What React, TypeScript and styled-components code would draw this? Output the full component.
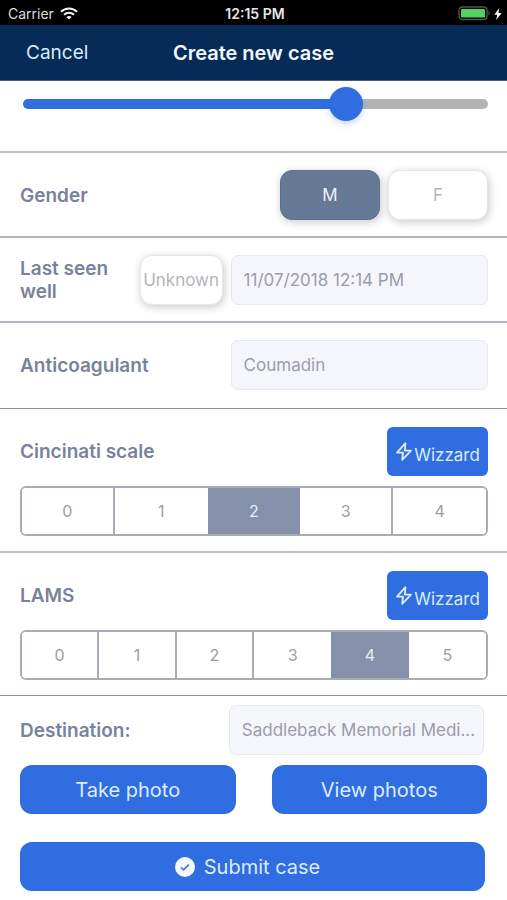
import React, { useState } from "react";
import styled, { createGlobalStyle, css } from "styled-components";

const blue = "#2f6de1";
const slate = "#7a829b";
const line = "#a9abb9";

const GlobalStyle = createGlobalStyle`
  *, *::before, *::after { box-sizing: border-box; }
  body {
    margin: 0;
    background: #fff;
    font-family: Inter, "Liberation Sans", sans-serif;
    color: ${slate};
  }
  button, input, select { font-family: inherit; margin: 0; }
`;

const Screen = styled.div`
  min-height: 100vh;
  display: flex;
  flex-direction: column;
`;

const StatusBar = styled.div`
  display: grid;
  grid-template-columns: 1fr auto 1fr;
  align-items: center;
  height: 25px;
  padding: 2px 5px 0 8px;
  background: #000;
  color: #dcdcdc;
  font-size: 14px;
  line-height: 20px;
`;

const StatusGroup = styled.div<{ $end?: boolean }>`
  display: flex;
  align-items: center;
  gap: ${(p) => (p.$end ? 3 : 6)}px;
  justify-content: ${(p) => (p.$end ? "flex-end" : "flex-start")};
`;

const Clock = styled.span`
  font-size: 14px;
  font-weight: 600;
  color: #e6e6e6;
`;

const NavBar = styled.header`
  display: grid;
  grid-template-columns: 1fr auto 1fr;
  align-items: center;
  height: 56px;
  padding: 0 26px;
  background: #062b57;
  border-bottom: 1px solid #46597c;
`;

const CancelButton = styled.button`
  justify-self: start;
  padding: 0;
  border: 0;
  background: none;
  color: #d9e9fb;
  font-size: 19px;
  line-height: 24px;
`;

const Title = styled.h1`
  margin: 0;
  color: #f2f8ff;
  font-size: 20px;
  line-height: 24px;
  font-weight: 600;
`;

const Section = styled.section<{ $rule?: number; $tone?: string }>`
  padding: 17px 19px 16px 20px;
  border-bottom: ${(p) => p.$rule ?? 2}px solid ${(p) => p.$tone ?? "#b3b3c6"};
`;

const SliderSection = styled(Section)`
  padding: 6px 19px 30px 23px;
`;

const AnticoagulantSection = styled(Section)`
  padding-bottom: 18px;
`;

const Range = styled.input<{ $fill: number }>`
  display: block;
  width: 100%;
  height: 34px;
  appearance: none;
  background: none;

  &::-webkit-slider-runnable-track {
    height: 10px;
    border-radius: 5px;
    background: linear-gradient(to right, ${blue} ${(p) => p.$fill}%, #b3b3b3 ${(p) => p.$fill}%);
  }
  &::-webkit-slider-thumb {
    appearance: none;
    width: 34px;
    height: 34px;
    margin-top: -12px;
    border-radius: 50%;
    background: ${blue};
    box-shadow: 0 3px 6px rgba(47, 109, 225, 0.25);
  }
`;

const Row = styled.div`
  display: flex;
  align-items: center;
  gap: 8px;
`;

const labelText = css`
  flex: 1;
  font-size: 19px;
  line-height: 23px;
  font-weight: 600;
  color: ${slate};
`;

const FieldLabel = styled.label`
  ${labelText}
`;

const GroupLabel = styled.div`
  ${labelText}
`;

const HiddenInput = styled.input`
  position: absolute;
  opacity: 0;
  pointer-events: none;
`;

const Pill = styled.label<{ $on?: boolean; $width: number }>`
  position: relative;
  display: flex;
  align-items: center;
  justify-content: center;
  width: ${(p) => p.$width}px;
  height: 50px;
  border: 1px solid ${(p) => (p.$on ? "#5d7190" : "#e6e6e9")};
  border-radius: 12px;
  background: ${(p) => (p.$on ? "#677a95" : "#fff")};
  color: ${(p) => (p.$on ? "#e9f2fc" : "#b4b5ba")};
  font-size: 17px;
  line-height: 24px;
  box-shadow: 1px 2px 9px rgba(0, 0, 0, 0.22);
`;

const fieldBox = css`
  flex: none;
  width: 55%;
  height: 50px;
  padding: 0 0 0 12px;
  border: 1px solid #e7e9ee;
  border-radius: 7px;
  background: #f4f6fb;
  color: #989dad;
  font-size: 17px;
  line-height: 24px;
`;

const TextField = styled.input`
  ${fieldBox}
`;

const SelectField = styled.select`
  ${fieldBox}
  appearance: none;
`;

const WizardButton = styled.button`
  display: flex;
  align-items: center;
  justify-content: center;
  gap: 1px;
  width: 101px;
  height: 49px;
  padding: 0;
  border: 0;
  border-radius: 6px;
  background: ${blue};
  color: #d9ebff;
  font-size: 17px;
  line-height: 24px;

  span { padding-top: 6px; }
`;

const ScaleSection = styled(Section)`
  padding: 18px 19px 15px 20px;
`;

const Segments = styled.div`
  display: grid;
  grid-auto-flow: column;
  grid-auto-columns: minmax(0, 1fr);
  height: 50px;
  margin-top: 10px;
  border: 2px solid ${line};
  border-radius: 6px;
  overflow: hidden;
`;

const Segment = styled.label<{ $on: boolean; $divided: boolean }>`
  position: relative;
  display: flex;
  align-items: center;
  justify-content: center;
  border-right: ${(p) => (p.$divided ? `2px solid ${line}` : "0")};
  background: ${(p) => (p.$on ? "#8590aa" : "#fff")};
  color: ${(p) => (p.$on ? "#e7f0fb" : "#9b9da6")};
  font-size: 16px;
  line-height: 20px;
`;

const Footer = styled.section`
  padding: 9px 20px;
`;

const DestinationRow = styled(Row)`
  padding-right: 3px;
`;

const PhotoRow = styled.div`
  display: grid;
  grid-template-columns: 1fr 1fr;
  gap: 36px;
  margin-top: 10px;
`;

const ActionButton = styled.button`
  display: flex;
  align-items: center;
  justify-content: center;
  gap: 9px;
  width: 100%;
  height: 49px;
  border: 0;
  border-radius: 12px;
  background: ${blue};
  color: #dcecff;
  font-size: 20px;
  line-height: 24px;
`;

const SubmitButton = styled(ActionButton)`
  padding: 0 16px 0 6px;
`;

const SubmitRow = styled.div`
  margin-top: 28px;
  padding-right: 2px;
`;

const WifiIcon = () => (
  <svg width="18" height="13" viewBox="0 0 18 13" fill="none" stroke="#f2f2f2" strokeWidth="2.1" aria-hidden="true">
    <path d="M1 4.8C5.5.4 12.5.4 17 4.8" />
    <path d="M4 7.8c2.8-2.7 7.2-2.7 10 0" />
    <path d="M6.4 10.1c1.5-1.4 3.7-1.4 5.2 0L9 12.6z" fill="#f2f2f2" stroke="none" />
  </svg>
);

const BatteryIcon = () => (
  <svg width="33" height="15" viewBox="0 0 33 15" aria-hidden="true">
    <rect x="1" y="1" width="28" height="12.5" rx="3.2" fill="none" stroke="#4b574d" strokeWidth="1.4" />
    <rect x="3" y="3" width="24" height="8.5" rx="1.2" fill="#4fd463" />
    <path d="M30.5 5c1.5.6 1.5 4 0 4.6z" fill="#4b574d" />
  </svg>
);

const ChargeIcon = () => (
  <svg width="8" height="12" viewBox="0 0 8 12" fill="#fff" aria-hidden="true">
    <path d="M5.3 0 .4 6.8h2.8L2.2 12l5.4-7H4.4z" />
  </svg>
);

const BoltIcon = () => (
  <svg
    width="18"
    height="20"
    viewBox="0 0 18 20"
    fill="none"
    stroke="#d9ebff"
    strokeWidth="1.8"
    strokeLinejoin="round"
    aria-hidden="true"
  >
    <path d="M10.4 1.2 2 10.7h6L7.2 17.8l8.8-9.2h-6.2z" />
  </svg>
);

const CheckIcon = () => (
  <svg width="20" height="20" viewBox="0 0 20 20" aria-hidden="true">
    <circle cx="10" cy="10" r="10" fill="#f3f8ff" />
    <path d="m6 10.4 2.6 2.4 5.2-5.1" fill="none" stroke="#4a77c5" strokeWidth="1.7" />
  </svg>
);

interface ScaleProps {
  name: string;
  label: string;
  count: number;
  initial: number;
  rule: number;
  tone: string;
}

function Scale({ name, label, count, initial, rule, tone }: ScaleProps) {
  const [value, setValue] = useState(initial);
  return (
    <ScaleSection $rule={rule} $tone={tone}>
      <Row>
        <GroupLabel id={`${name}-label`}>{label}</GroupLabel>
        <WizardButton type="button">
          <BoltIcon />
          <span>Wizzard</span>
        </WizardButton>
      </Row>
      <Segments role="radiogroup" aria-labelledby={`${name}-label`}>
        {Array.from({ length: count }, (_, i) => (
          <Segment key={i} $on={i === value} $divided={i < count - 1 && i !== value && i + 1 !== value}>
            <HiddenInput type="radio" name={name} checked={i === value} onChange={() => setValue(i)} />
            {i}
          </Segment>
        ))}
      </Segments>
    </ScaleSection>
  );
}

export default function App() {
  const [age, setAge] = useState(71);
  const [gender, setGender] = useState("M");
  const [unknown, setUnknown] = useState(false);
  const [seen, setSeen] = useState("11/07/2018 12:14 PM");

  return (
    <Screen>
      <GlobalStyle />
      <StatusBar>
        <StatusGroup>
          <span>Carrier</span>
          <WifiIcon />
        </StatusGroup>
        <Clock>12:15 PM</Clock>
        <StatusGroup $end>
          <BatteryIcon />
          <ChargeIcon />
        </StatusGroup>
      </StatusBar>
      <NavBar>
        <CancelButton type="button">Cancel</CancelButton>
        <Title>Create new case</Title>
      </NavBar>
      <main>
        <SliderSection $tone="#bebec1">
          <Range
            type="range"
            aria-label="Age"
            min={0}
            max={100}
            value={age}
            $fill={age}
            onChange={(e) => setAge(Number(e.target.value))}
          />
        </SliderSection>
        <Section>
          <Row role="radiogroup" aria-labelledby="gender-label">
            <GroupLabel id="gender-label">Gender</GroupLabel>
            {["M", "F"].map((g) => (
              <Pill key={g} $on={gender === g} $width={100}>
                <HiddenInput type="radio" name="gender" checked={gender === g} onChange={() => setGender(g)} />
                {g}
              </Pill>
            ))}
          </Row>
        </Section>
        <Section>
          <Row>
            <FieldLabel htmlFor="seen">Last seen well</FieldLabel>
            <Pill $on={unknown} $width={83}>
              <HiddenInput type="checkbox" checked={unknown} onChange={() => setUnknown(!unknown)} />
              Unknown
            </Pill>
            <TextField id="seen" value={seen} onChange={(e) => setSeen(e.target.value)} />
          </Row>
        </Section>
        <AnticoagulantSection $rule={1} $tone="#8e8f9c">
          <Row>
            <FieldLabel htmlFor="anticoagulant">Anticoagulant</FieldLabel>
            <SelectField id="anticoagulant">
              <option>Coumadin</option>
            </SelectField>
          </Row>
        </AnticoagulantSection>
        <Scale name="cincinati" label="Cincinati scale" count={5} initial={2} rule={2} tone="#bebec1" />
        <Scale name="lams" label="LAMS" count={6} initial={4} rule={1} tone="#8e8f9c" />
        <Footer>
          <DestinationRow>
            <FieldLabel htmlFor="destination">Destination:</FieldLabel>
            <SelectField id="destination">
              <option>Saddleback Memorial Medi...</option>
            </SelectField>
          </DestinationRow>
          <PhotoRow>
            <ActionButton type="button">Take photo</ActionButton>
            <ActionButton type="button">View photos</ActionButton>
          </PhotoRow>
          <SubmitRow>
            <SubmitButton type="submit">
              <CheckIcon />
              Submit case
            </SubmitButton>
          </SubmitRow>
        </Footer>
      </main>
    </Screen>
  );
}
